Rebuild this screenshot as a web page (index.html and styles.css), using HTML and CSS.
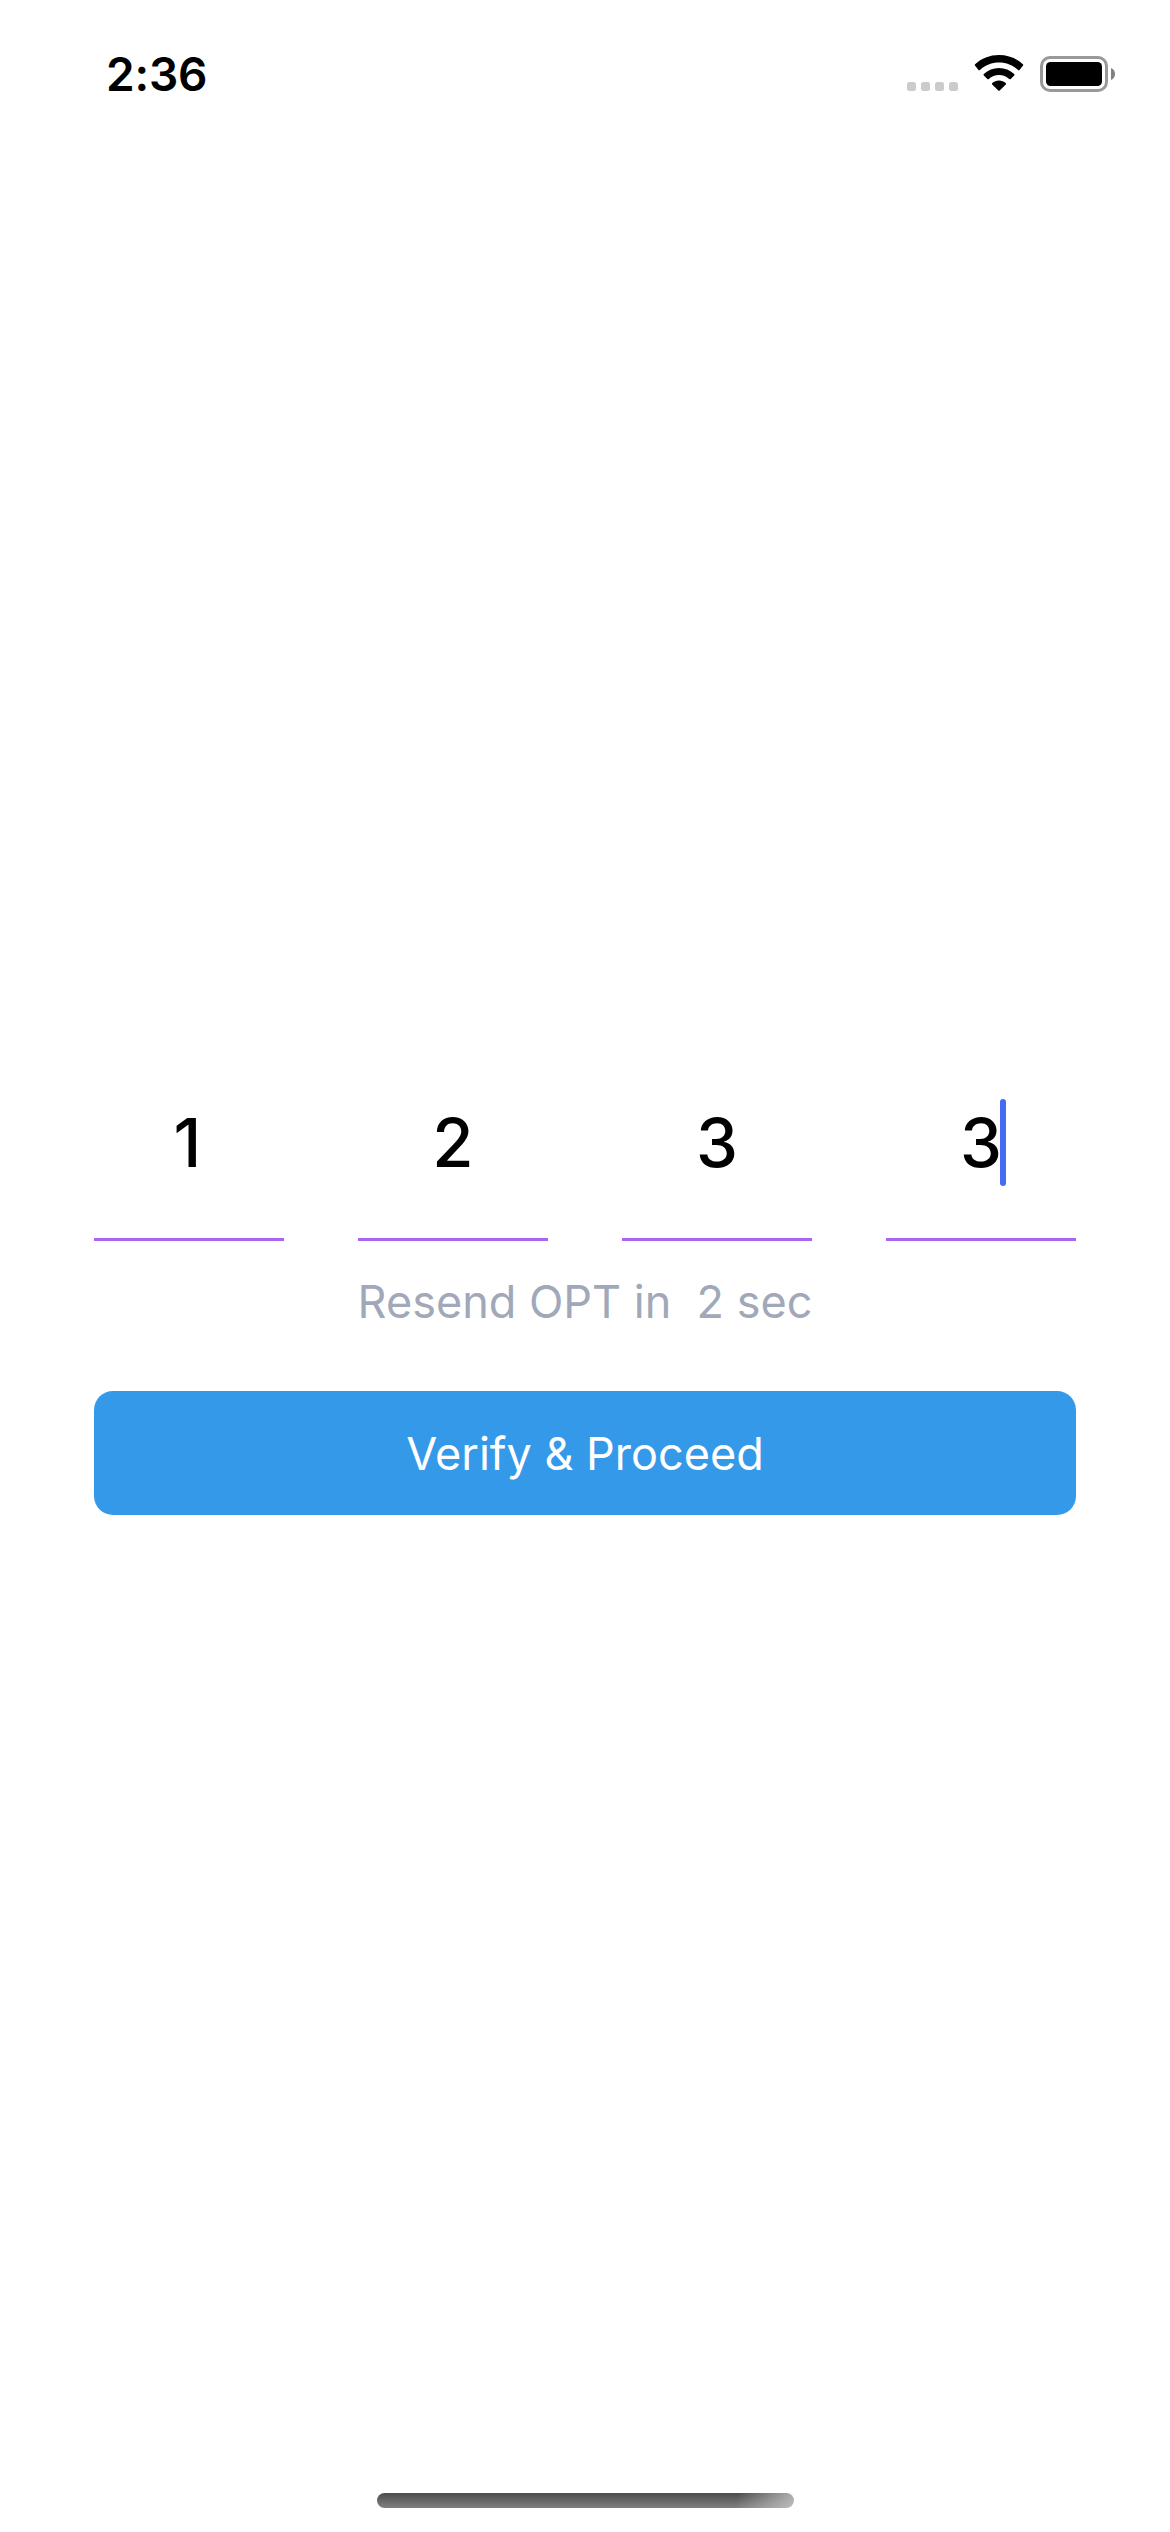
FILE: index.html
```html
<!DOCTYPE html>
<html lang="en">
<head>
<meta charset="utf-8">
<title>Verify code</title>
<link rel="stylesheet" href="styles.css">
</head>
<body>
<div class="screen">
  <header class="status">
    <span class="time">2:36</span>
    <svg class="indicators" width="210" height="40" viewBox="0 0 210 40">
      <g fill="#cbcbcb">
        <rect x="2" y="28" width="9" height="9" rx="2.5"/>
        <rect x="16" y="28" width="9" height="9" rx="2.5"/>
        <rect x="30" y="28" width="9" height="9" rx="2.5"/>
        <rect x="44" y="28" width="9" height="9" rx="2.5"/>
      </g>
      <path d="M94 1C103.200 1 111.700 4.400 117.900 10.300Q118.600 11 117.900 11.700L114.500 15.900Q113.800 16.600 113 15.900C107.900 11.200 101.300 8.600 94 8.600S80.100 11.200 75 15.900Q74.200 16.600 73.500 15.900L70.100 11.700Q69.400 11 70.100 10.300C76.300 4.400 84.800 1 94 1Z"/>
      <path d="M94 14C99.700 14 105 16.100 109.200 20Q109.900 20.700 109.200 21.400L105.700 24.900Q105 25.600 104.200 25C101.300 22.500 97.900 21 94 21S86.700 22.500 83.800 25Q83 25.600 82.300 24.900L78.800 21.400Q78.100 20.700 78.800 20C83 16.100 88.300 14 94 14Z"/>
      <path d="M94 26.500C96.600 26.500 98.900 27.400 100.700 29Q101.500 29.700 100.800 30.400L94.700 36.500Q94 37.200 93.300 36.500L87.200 30.400Q86.500 29.700 87.300 29C89.100 27.400 91.400 26.500 94 26.500Z"/>
      <rect x="136.500" y="3.500" width="65" height="33" rx="8.500" fill="none" stroke="#999" stroke-width="3"/>
      <rect x="141" y="8" width="56" height="24" rx="4.500"/>
      <path d="M206 14C208.500 15 210 17.300 210 20S208.500 25 206 26Z" fill="#808080"/>
    </svg>
  </header>
  <main class="form">
    <div class="code">
      <div class="cell first"><span class="digit">1</span></div>
      <div class="cell"><span class="digit">2</span></div>
      <div class="cell"><span class="digit">3</span></div>
      <div class="cell active"><span class="digit">3</span><i class="caret"></i></div>
    </div>
    <p class="resend">Resend OPT in&nbsp; 2 sec</p>
    <button class="verify" type="button"><span>Verify &amp; Proceed</span></button>
  </main>
  <footer class="home"><div class="home-bar"></div></footer>
</div>
</body>
</html>
```
FILE: styles.css
```css
* { box-sizing: border-box; }
body {
  margin: 0;
  background: #fff;
  color: #000;
  font-family: Inter, "Liberation Sans", sans-serif;
}
.screen {
  width: 1170px;
  height: 2532px;
  display: flex;
  flex-direction: column;
  overflow: hidden;
}
.status {
  height: 141px;
  padding: 54px 55px 0 106px;
  display: flex;
  justify-content: space-between;
  align-items: flex-start;
}
.time {
  font-size: 46px;
  font-weight: 600;
  line-height: 40px;
  letter-spacing: -0.2px;
}
.indicators { display: block; }
.form {
  flex: 1;
  padding: 950px 94px 0;
  display: flex;
  flex-direction: column;
}
.code {
  display: grid;
  grid-template-columns: repeat(4, 190px);
  column-gap: 74px;
}
.cell {
  height: 150px;
  border-bottom: 3px solid #a966f0;
  display: flex;
  justify-content: center;
}
.first { padding-right: 3px; }
.digit {
  font-size: 67px;
  font-weight: 500;
  line-height: 103px;
}
.active { position: relative; }
.caret {
  position: absolute;
  left: 114px;
  top: 8px;
  width: 6px;
  height: 87px;
  border-radius: 3px;
  background: #446cf2;
}
.resend {
  margin: 31px 0 0;
  height: 60px;
  line-height: 60px;
  font-size: 45px;
  color: #a1a8b9;
  text-align: center;
  white-space: nowrap;
}
.verify {
  margin-top: 59px;
  height: 124px;
  border: 0;
  border-radius: 19px;
  background: #3599ea;
  color: #fff;
  font-family: inherit;
  font-size: 45px;
  padding: 0;
}
.home {
  height: 39px;
  display: flex;
  justify-content: center;
}
.home-bar {
  width: 417px;
  height: 15px;
  border-radius: 8px;
  background:
    linear-gradient(100deg, transparent 86%, rgba(210, 210, 210, .75) 100%),
    linear-gradient(#4c4c4c, #808080);
}
```
